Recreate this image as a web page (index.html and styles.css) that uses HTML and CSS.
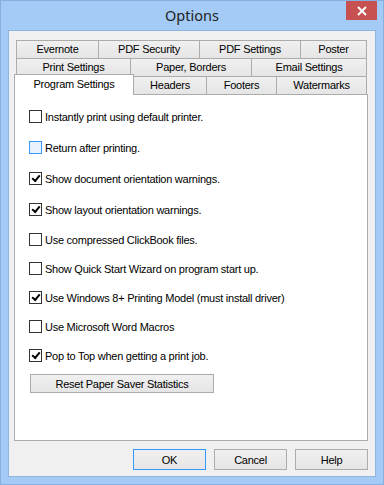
FILE: index.html
```html
<!DOCTYPE html>
<html lang="en">
<head>
    <meta charset="UTF-8">
    <title>Options</title>
    <link rel="stylesheet" href="styles.css">
</head>
<body>
    <div class="window">
        <div class="titlebar">
            <span class="title">Options</span>
            <button class="close" aria-label="Close">
                <svg width="10" height="10" viewBox="0 0 10 10">
                    <path d="M1 1 L9 9 M9 1 L1 9" stroke="#fff" stroke-width="2"/>
                </svg>
            </button>
        </div>

        <div class="client">
            <div class="tabs">
                <div class="tab-row">
                    <div class="tab tab-evernote">Evernote</div>
                    <div class="tab tab-pdf-security">PDF Security</div>
                    <div class="tab tab-pdf-settings">PDF Settings</div>
                    <div class="tab tab-poster">Poster</div>
                </div>
                <div class="tab-row">
                    <div class="tab tab-print">Print Settings</div>
                    <div class="tab tab-paper">Paper, Borders</div>
                    <div class="tab tab-email">Email Settings</div>
                </div>
                <div class="tab-row tab-row-front">
                    <div class="tab tab-active">Program Settings</div>
                    <div class="tab tab-headers">Headers</div>
                    <div class="tab tab-footers">Footers</div>
                    <div class="tab tab-watermarks">Watermarks</div>
                </div>
            </div>

            <div class="panel">
                <ul class="options">
                    <li class="option"><span class="box"></span>Instantly print using default printer.</li>
                    <li class="option"><span class="box box-hover"></span>Return after printing.</li>
                    <li class="option"><span class="box checked"></span>Show document orientation warnings.</li>
                    <li class="option"><span class="box checked"></span>Show layout orientation warnings.</li>
                    <li class="option"><span class="box"></span>Use compressed ClickBook files.</li>
                    <li class="option"><span class="box"></span>Show Quick Start Wizard on program start up.</li>
                    <li class="option"><span class="box checked"></span>Use Windows 8+ Printing Model (must install driver)</li>
                    <li class="option"><span class="box"></span>Use Microsoft Word Macros</li>
                    <li class="option"><span class="box checked"></span>Pop to Top when getting a print job.</li>
                </ul>
                <button class="btn btn-reset">Reset Paper Saver Statistics</button>
            </div>

            <div class="actions">
                <button class="btn btn-default">OK</button>
                <button class="btn">Cancel</button>
                <button class="btn">Help</button>
            </div>
        </div>
    </div>
</body>
</html>
```

FILE: styles.css
```css
body {
    margin: 0;
    padding: 0;
    font-family: 'Liberation Sans', Arial, sans-serif;
    font-size: 11px;
    letter-spacing: -0.25px;
    color: #000;
}
.window {
    width: 384px;
    height: 485px;
    box-sizing: border-box;
    background: #a4cbf5;
    border: 1px solid #86b0e2;
    display: flex;
    flex-direction: column;
}
.titlebar {
    height: 29px;
    display: grid;
    grid-template-columns: 1fr auto 1fr;
    align-items: start;
}
.title {
    grid-column: 2;
    font-family: 'Noto Sans', sans-serif;
    font-size: 14.5px;
    letter-spacing: 0;
    color: #222;
    line-height: 28px;
}
.close {
    grid-column: 3;
    justify-self: end;
    width: 31px;
    height: 19px;
    margin-right: 6px;
    padding: 0;
    border: none;
    background: #c75050;
    display: flex;
    align-items: center;
    justify-content: center;
}
.client {
    flex: 1;
    margin: 0 7px 7px 7px;
    background: #f0f0f0;
    border: 1px solid #8fb4df;
    padding: 9px 0 0 5px;
}
.tab-row {
    display: flex;
    align-items: flex-start;
    margin-left: 2px;
    margin-top: -1px;
}
.tab-row:first-child {
    margin-top: 0;
}
.tab-row-front {
    margin-left: 0;
}
.tab {
    box-sizing: border-box;
    height: 19px;
    line-height: 17px;
    text-align: center;
    border: 1px solid #acacac;
    background: linear-gradient(#f0f0f0, #e5e5e5);
    margin-left: -1px;
    white-space: nowrap;
}
.tab:first-child {
    margin-left: 0;
}
.tab-row-front .tab {
    height: 18px;
    border-bottom: none;
}
.tab-row-front .tab-active {
    position: relative;
    z-index: 1;
    width: 120px;
    height: 21px;
    margin-top: -2px;
    margin-bottom: -1px;
    background: #fff;
    line-height: 19px;
}
.tab-evernote { width: 83px; }
.tab-pdf-security { width: 102px; }
.tab-pdf-settings { width: 102px; }
.tab-poster { width: 67px; }
.tab-print { width: 115px; }
.tab-paper { width: 122px; }
.tab-email { width: 116px; }
.tab-headers { width: 74px; }
.tab-footers { width: 71px; }
.tab-watermarks { width: 91px; }

.panel {
    box-sizing: border-box;
    width: 354px;
    height: 347px;
    background: #fff;
    border: 1px solid #acacac;
    padding: 15px 0 0 14px;
}
.options {
    list-style: none;
    margin: 0;
    padding: 0;
    display: flex;
    flex-direction: column;
    gap: 16px;
}
.option {
    display: flex;
    align-items: center;
    height: 13px;
    white-space: nowrap;
}
/* the first rows sit a little further apart */
.option:nth-child(-n+3) {
    margin-bottom: 2px;
}
.option:nth-child(4) {
    margin-bottom: 1px;
}
.box {
    box-sizing: border-box;
    width: 13px;
    height: 13px;
    border: 1px solid #333;
    background: #fff;
    margin-right: 3px;
    flex-shrink: 0;
    display: flex;
    align-items: center;
    justify-content: center;
}
.box-hover {
    border-color: #3399ff;
    background: #e8f2fd;
}
.box.checked::after {
    content: "";
    width: 6px;
    height: 3px;
    border-left: 2px solid #000;
    border-bottom: 2px solid #000;
    transform: translate(0, -1px) rotate(-50deg);
}
.btn {
    box-sizing: border-box;
    width: 73px;
    height: 21px;
    padding: 0;
    font-family: inherit;
    font-size: 11px;
    letter-spacing: inherit;
    color: #000;
    border: 1px solid #acacac;
    background: linear-gradient(#f0f0f0, #e5e5e5);
}
.btn-reset {
    width: 184px;
    height: 19px;
    margin: 12px 0 0 1px;
}
.btn-default {
    border-color: #3399ff;
}
.actions {
    display: flex;
    justify-content: flex-end;
    gap: 8px;
    margin-top: 8px;
    padding-right: 7px;
}
```
